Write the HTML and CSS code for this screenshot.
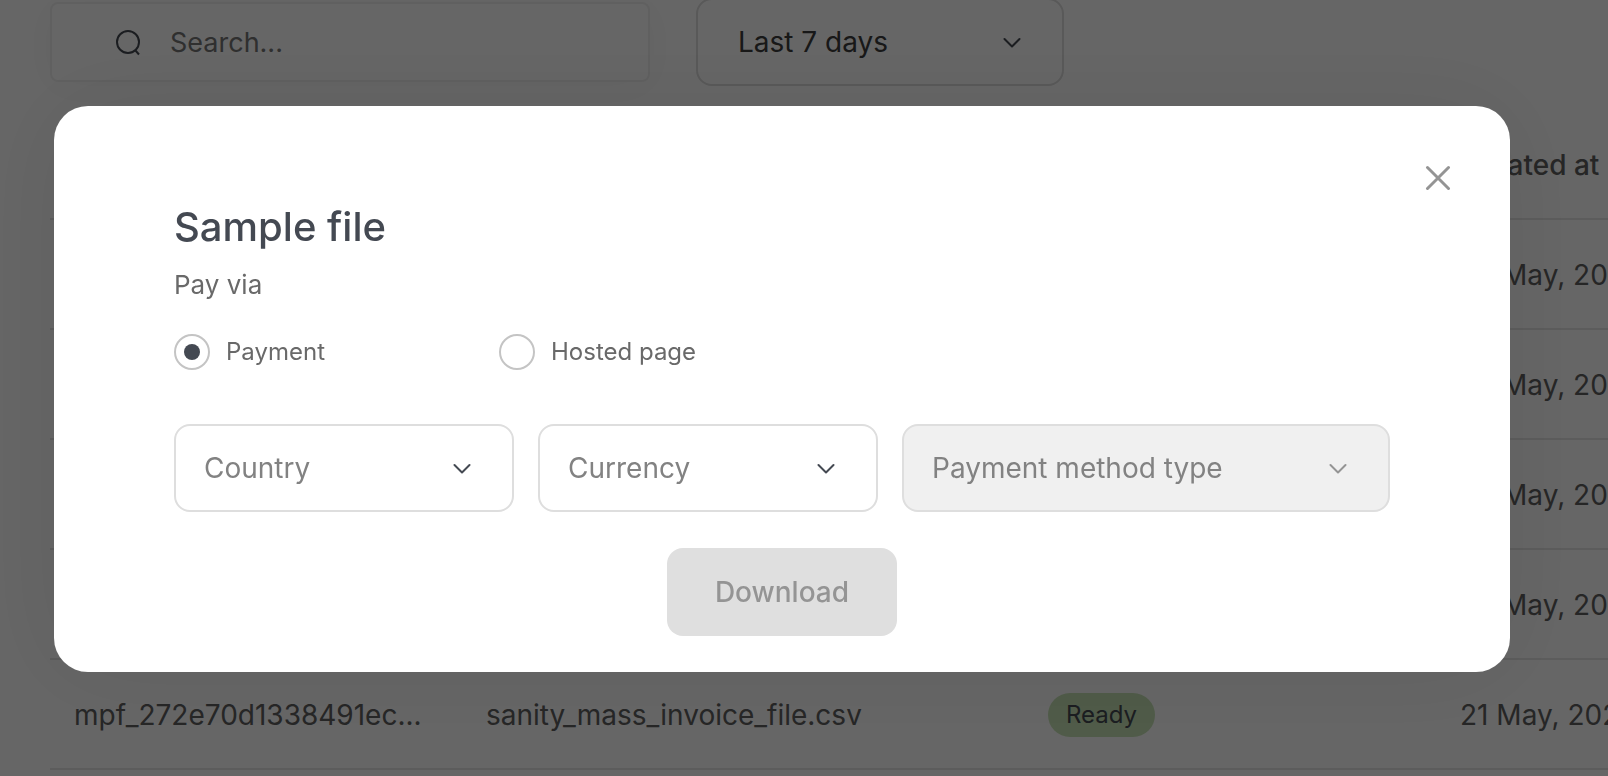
FILE: index.html
```html
<!DOCTYPE html>
<html lang="en">
<head>
    <meta charset="UTF-8">
    <meta name="viewport" content="width=device-width, initial-scale=1.0">
    <title>Sample file</title>
    <link rel="stylesheet" href="styles.css">
</head>
<body>

    <main class="page">
        <div class="filters">
            <label class="search-box">
                <svg class="search-icon" viewBox="0 0 28 28" aria-hidden="true">
                    <circle cx="14" cy="14" r="11"/>
                    <path d="M21 22l4 4.5"/>
                </svg>
                <input type="text" class="search-input" placeholder="Search..." aria-label="Search">
            </label>

            <div class="select-box period">
                <select aria-label="Period">
                    <option>Last 7 days</option>
                </select>
                <svg class="chevron" viewBox="0 0 18 12" aria-hidden="true"><path d="M1.5 2L9 9.5 16.5 2"/></svg>
            </div>
        </div>

        <table class="files">
            <colgroup>
                <col class="col-id">
                <col class="col-name">
                <col class="col-status">
                <col>
            </colgroup>
            <thead>
                <tr><th></th><th></th><th></th><th>Created at</th></tr>
            </thead>
            <tbody>
                <tr><td></td><td></td><td></td><td>22 May, 2023</td></tr>
                <tr><td></td><td></td><td></td><td>22 May, 2023</td></tr>
                <tr><td></td><td></td><td></td><td>22 May, 2023</td></tr>
                <tr><td></td><td></td><td></td><td>22 May, 2023</td></tr>
                <tr>
                    <td>mpf_272e70d1338491ec...</td>
                    <td>sanity_mass_invoice_file.csv</td>
                    <td><span class="status">Ready</span></td>
                    <td>21 May, 2023</td>
                </tr>
            </tbody>
        </table>
    </main>

    <div class="overlay">
        <form class="modal" role="dialog" aria-labelledby="modal-title">
            <button type="button" class="close-button" aria-label="Close">
                <svg viewBox="0 0 28 28" aria-hidden="true"><path d="M3.5 3.5l21 21M24.5 3.5l-21 21"/></svg>
            </button>

            <h2 id="modal-title">Sample file</h2>

            <fieldset class="pay-via">
                <legend>Pay via</legend>
                <div class="radios">
                    <label class="radio"><input type="radio" name="pay" checked>Payment</label>
                    <label class="radio"><input type="radio" name="pay">Hosted page</label>
                </div>
            </fieldset>

            <div class="selects">
                <div class="select-box">
                    <select aria-label="Country">
                        <option>Country</option>
                    </select>
                    <svg class="chevron" viewBox="0 0 18 12" aria-hidden="true"><path d="M1.5 2L9 9.5 16.5 2"/></svg>
                </div>
                <div class="select-box">
                    <select aria-label="Currency">
                        <option>Currency</option>
                    </select>
                    <svg class="chevron" viewBox="0 0 18 12" aria-hidden="true"><path d="M1.5 2L9 9.5 16.5 2"/></svg>
                </div>
                <div class="select-box disabled">
                    <select aria-label="Payment method type" disabled>
                        <option>Payment method type</option>
                    </select>
                    <svg class="chevron" viewBox="0 0 18 12" aria-hidden="true"><path d="M1.5 2L9 9.5 16.5 2"/></svg>
                </div>
            </div>

            <button type="submit" class="download-button" disabled>Download</button>
        </form>
    </div>

</body>
</html>
```
FILE: styles.css
```css
* {
    box-sizing: border-box;
    font-family: Inter, "Liberation Sans", sans-serif;
}
body {
    margin: 0;
    height: 100vh;
    overflow: hidden;
    background-color: #ffffff;
    font-size: 28px;
}

/* Page behind the modal */
.page {
    padding-left: 50px;
    margin-top: -2px;
}
.filters {
    display: flex;
    align-items: center;
    gap: 46px;
}
.search-box {
    display: flex;
    align-items: center;
    gap: 28px;
    width: 600px;
    height: 80px;
    padding: 0 62px;
    border: 2px solid #f0f0f0;
    border-radius: 8px;
    box-shadow: 0 4px 40px rgba(0, 0, 0, 0.04);
}
.search-icon {
    width: 28px;
    height: 28px;
    flex: none;
    fill: none;
    stroke: #444952;
    stroke-width: 2;
}
.search-input {
    flex: 1;
    min-width: 0;
    padding: 0;
    border: none;
    outline: none;
    background: none;
    font-size: 27px;
}
.search-input::placeholder {
    color: #757575;
}

.select-box {
    position: relative;
}
.select-box select {
    appearance: none;
    display: block;
    width: 100%;
    height: 88px;
    padding: 0 80px 0 28px;
    border: 2px solid #dedede;
    border-radius: 16px;
    background-color: transparent;
    color: #828282;
    font-size: 28px;
    opacity: 1;
}
.chevron {
    position: absolute;
    right: 43px;
    top: 39px;
    width: 18px;
    height: 12px;
    fill: none;
    stroke: #444952;
    stroke-width: 2;
    stroke-linecap: round;
    stroke-linejoin: round;
    pointer-events: none;
}
.period {
    width: 368px;
}
.period select {
    padding-left: 40px;
    color: #3c3c3c;
}

.files {
    width: 100%;
    margin-top: 24px;
    table-layout: fixed;
    border-collapse: separate;
    border-spacing: 0;
}
.col-id {
    width: 412px;
}
.col-name {
    width: 562px;
}
.col-status {
    width: 412px;
}
.files th,
.files td {
    height: 110px;
    padding: 2px 24px 0;
    border-bottom: 2px solid #e6e6e6;
    color: #606060;
    text-align: left;
    white-space: nowrap;
}
.files th {
    font-weight: 500;
}
.status {
    display: inline-block;
    padding: 0 18px;
    border-radius: 22px;
    background-color: #c8e4b6;
    color: #444952;
    font-size: 24px;
    line-height: 44px;
    vertical-align: middle;
}

/* Modal */
.overlay {
    position: fixed;
    inset: 0;
    padding: 106px 98px 0 54px;
    background-color: rgba(0, 0, 0, 0.6);
}
.modal {
    position: relative;
    padding: 97px 120px 36px;
    border-radius: 34px;
    background-color: #ffffff;
    box-shadow: 0 0 100px rgba(0, 0, 0, 0.08);
}
.close-button {
    position: absolute;
    top: 58px;
    right: 58px;
    width: 28px;
    height: 28px;
    padding: 0;
    border: none;
    background: none;
    cursor: pointer;
}
.close-button svg {
    display: block;
    fill: none;
    stroke: #949494;
    stroke-width: 3;
    stroke-linecap: round;
}
.modal h2 {
    margin: 0 0 16px;
    color: #444952;
    font-size: 40px;
    font-weight: 500;
    line-height: 48px;
}
.pay-via {
    margin: 0;
    padding: 0;
    border: none;
    color: #696969;
}
.pay-via legend {
    padding: 0;
    font-size: 26px;
    line-height: 36px;
}
.radios {
    display: flex;
    margin-top: 31px;
}
.radio {
    display: flex;
    align-items: center;
    gap: 16px;
    width: 325px;
    font-size: 24px;
    line-height: 36px;
}
.radio input {
    display: grid;
    place-items: center;
    appearance: none;
    width: 36px;
    height: 36px;
    margin: 0;
    border: 2px solid #c4c4c4;
    border-radius: 50%;
}
.radio input:checked::before {
    content: "";
    width: 16px;
    height: 16px;
    border-radius: 50%;
    background-color: #444952;
}
.selects {
    display: grid;
    grid-template-columns: 340fr 340fr 488fr;
    gap: 24px;
    margin-top: 54px;
}
.select-box.disabled select {
    background-color: #f0f0f0;
}
.disabled .chevron {
    stroke: #949494;
}
.download-button {
    display: block;
    height: 88px;
    margin: 36px auto 0;
    padding: 0 48px;
    border: none;
    border-radius: 16px;
    background-color: #dfdfdf;
    color: #949494;
    font-size: 28px;
    font-weight: 500;
}
```
